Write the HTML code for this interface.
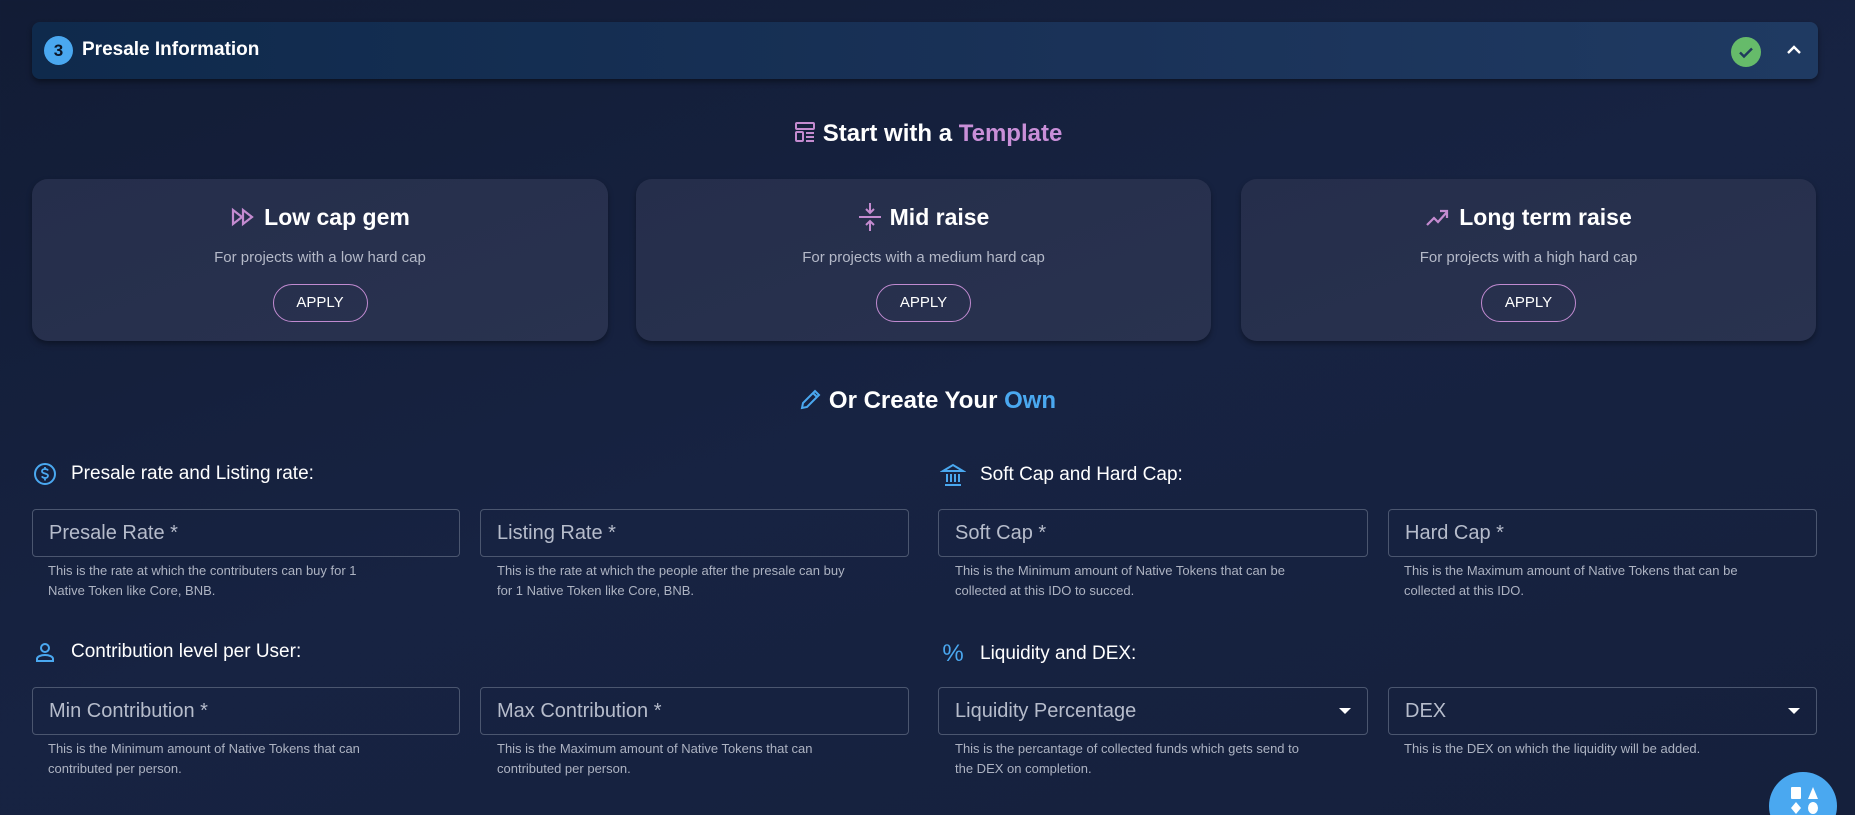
<!DOCTYPE html>
<html><head><meta charset="utf-8"><style>
*{box-sizing:border-box;margin:0;padding:0}
html{overflow:hidden;width:1855px;height:815px}
body{width:1855px;height:815px;overflow:hidden;background:linear-gradient(160deg,#121c35 0%,#172342 50%,#15203c 100%);font-family:"Liberation Sans",sans-serif;color:#fff;position:relative}
.abs{position:absolute}
.hdr{left:32px;top:22px;width:1786px;height:57px;border-radius:8px;background:linear-gradient(90deg,#0f2a4c,#1a3258 60%,#1f3a62);box-shadow:0 3px 6px rgba(0,0,0,.4)}
.num{left:44px;top:36px;width:29px;height:29px;border-radius:50%;background:#4aa8f0;color:#0b1526;font-weight:bold;font-size:17px;text-align:center;line-height:29px}
.h2{font-size:24px;font-weight:bold;width:100%;text-align:center;left:0}
.card{top:179px;height:162px;border-radius:16px;background:linear-gradient(160deg,#252e4b,#29324f);box-shadow:0 3px 6px rgba(0,0,0,.35);text-align:center}
.card .t{margin-top:23px;height:30px;font-size:23px;font-weight:bold;display:flex;justify-content:center;align-items:center;gap:8px}
.card .s{margin-top:17px;font-size:15px;color:#b4b9c8}
.card .b{margin:18px auto 0;width:95px;height:38px;border:1.5px solid #c08ad0;border-radius:20px;font-size:15px;line-height:35px}
.lbl{font-size:19px;display:flex;align-items:center;gap:14px}
.inp{height:48px;border:1px solid #4b566f;border-radius:4px;font-size:20px;color:#b6bccb;padding:0 16px;line-height:46px}
.help{font-size:13px;color:#adb3c2;line-height:20px;width:365px}
.arr{position:absolute;right:16px;top:20px;width:0;height:0;border-left:6px solid transparent;border-right:6px solid transparent;border-top:6px solid #fff}
</style></head><body>
<div class="abs hdr"></div>
<div class="abs num">3</div>
<div class="abs" style="left:82px;top:39px;font-size:19px;font-weight:bold">Presale Information</div>
<div class="abs" style="left:1731px;top:37px;width:30px;height:30px;border-radius:50%;background:#66bb6a"><svg width="30" height="30" viewBox="0 0 30 30"><path d="M9 15.5l4 4 8-8" stroke="#1f3a5c" stroke-width="2.4" fill="none"/></svg></div>
<svg class="abs" style="left:1786px;top:44px" width="16" height="12" viewBox="0 0 16 12"><path d="M2 9l6-6 6 6" stroke="#fff" stroke-width="2.4" fill="none"/></svg>

<div class="abs h2" style="top:120px"><svg width="24" height="24" viewBox="0 0 24 24" style="vertical-align:-3px;margin-right:6px"><g stroke="#c48bd0" stroke-width="2" fill="none"><rect x="3" y="3" width="18" height="6" rx="1"/><rect x="3" y="12" width="7" height="9" rx="1"/><path d="M13 13h8M13 17h8M13 21h8"/></g></svg>Start with a <span style="color:#c98fd8">Template</span></div>

<div class="abs card" style="left:32px;width:576px"><div class="t"><svg width="26" height="22" viewBox="0 0 26 22"><path d="M3 4l9 7-9 7zM13 4l9 7-9 7z" stroke="#c48bd0" stroke-width="2.2" fill="none"/></svg>Low cap gem</div><div class="s">For projects with a low hard cap</div><div class="b">APPLY</div></div>
<div class="abs card" style="left:636px;width:575px"><div class="t"><svg width="24" height="30" viewBox="0 0 24 30"><path d="M12 1v10M8 7l4 4 4-4M1 15h22M12 29V19M8 23l4-4 4 4" stroke="#c48bd0" stroke-width="2" fill="none"/></svg>Mid raise</div><div class="s">For projects with a medium hard cap</div><div class="b">APPLY</div></div>
<div class="abs card" style="left:1241px;width:575px"><div class="t"><svg width="26" height="22" viewBox="0 0 26 22"><path d="M2 19l7-7 4 4 9-10M15 5h7v7" stroke="#c48bd0" stroke-width="2.2" fill="none"/></svg>Long term raise</div><div class="s">For projects with a high hard cap</div><div class="b">APPLY</div></div>

<div class="abs h2" style="top:387px"><svg width="24" height="24" viewBox="0 0 24 24" style="vertical-align:-3px;margin-right:6px"><path d="M3 21l1-5L16 4l4 4L8 20z M14 6l4 4" stroke="#4aa8f0" stroke-width="2" fill="none"/></svg>Or Create Your <span style="color:#4aa8f0">Own</span></div>

<div class="abs lbl" style="left:33px;top:462px"><svg width="24" height="24" viewBox="0 0 24 24"><circle cx="12" cy="12" r="10" stroke="#4aa8f0" stroke-width="2" fill="none"/><path d="M15 8.5c-.5-1-1.6-1.5-3-1.5-1.8 0-3 .9-3 2.2 0 3 6 1.6 6 4.6 0 1.3-1.3 2.2-3 2.2-1.5 0-2.6-.6-3.1-1.7M12 5v2M12 16.5v2" stroke="#4aa8f0" stroke-width="1.8" fill="none"/></svg>Presale rate and Listing rate:</div>
<div class="abs lbl" style="left:940px;top:462px"><svg width="26" height="26" viewBox="0 0 26 26"><path d="M3 9L13 3l10 6zM3 9h20M5 23h16M7 12v8M11 12v8M15 12v8M19 12v8" stroke="#4aa8f0" stroke-width="2" fill="none"/></svg>Soft Cap and Hard Cap:</div>

<div class="abs inp" style="left:32px;top:509px;width:428px">Presale Rate *</div>
<div class="abs inp" style="left:480px;top:509px;width:429px">Listing Rate *</div>
<div class="abs inp" style="left:938px;top:509px;width:430px">Soft Cap *</div>
<div class="abs inp" style="left:1388px;top:509px;width:429px">Hard Cap *</div>
<div class="abs help" style="left:48px;top:561px;width:330px">This is the rate at which the contributers can buy for 1 Native Token like Core, BNB.</div>
<div class="abs help" style="left:497px;top:561px">This is the rate at which the people after the presale can buy for 1 Native Token like Core, BNB.</div>
<div class="abs help" style="left:955px;top:561px">This is the Minimum amount of Native Tokens that can be collected at this IDO to succed.</div>
<div class="abs help" style="left:1404px;top:561px">This is the Maximum amount of Native Tokens that can be collected at this IDO.</div>

<div class="abs lbl" style="left:33px;top:640px"><svg width="24" height="24" viewBox="0 0 24 24"><circle cx="12" cy="8" r="4" stroke="#4aa8f0" stroke-width="2" fill="none"/><path d="M4 21v-2c0-2.5 4-4 8-4s8 1.5 8 4v2z" stroke="#4aa8f0" stroke-width="2" fill="none"/></svg>Contribution level per User:</div>
<div class="abs lbl" style="left:940px;top:640px"><span style="color:#4aa8f0;font-size:24px;width:26px;text-align:center">%</span>Liquidity and DEX:</div>

<div class="abs inp" style="left:32px;top:687px;width:428px">Min Contribution *</div>
<div class="abs inp" style="left:480px;top:687px;width:429px">Max Contribution *</div>
<div class="abs inp" style="left:938px;top:687px;width:430px">Liquidity Percentage<span class="arr"></span></div>
<div class="abs inp" style="left:1388px;top:687px;width:429px">DEX<span class="arr"></span></div>
<div class="abs help" style="left:48px;top:739px">This is the Minimum amount of Native Tokens that can contributed per person.</div>
<div class="abs help" style="left:497px;top:739px">This is the Maximum amount of Native Tokens that can contributed per person.</div>
<div class="abs help" style="left:955px;top:739px">This is the percantage of collected funds which gets send to the DEX on completion.</div>
<div class="abs help" style="left:1404px;top:739px">This is the DEX on which the liquidity will be added.</div>

<div class="abs" style="left:1769px;top:772px;width:68px;height:68px;border-radius:50%;background:#4aa8f0"><svg width="68" height="68" viewBox="0 0 68 68"><rect x="22" y="15" width="10" height="12" rx="1" fill="#fff"/><path d="M39 27l5-12 5 12z" fill="#fff"/><path d="M27 30l5 6-5 6-5-6z" fill="#fff"/><ellipse cx="44" cy="36" rx="5" ry="6" fill="#fff"/></svg></div>
</body></html>
